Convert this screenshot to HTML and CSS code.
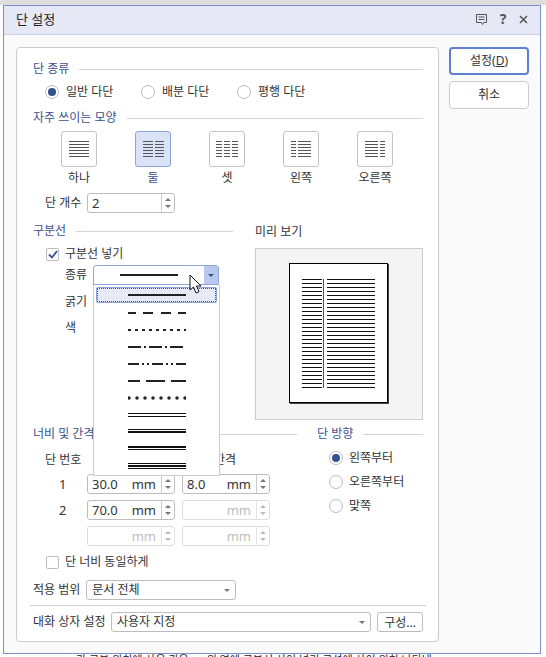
FILE: index.html
```html
<!DOCTYPE html>
<html lang="ko">
<head>
    <meta charset="UTF-8">
    <title>단 설정</title>
    <link rel="stylesheet" href="styles.css">
</head>
<body>
    <div class="top-strip"></div>
    <div class="dialog">
        <div class="titlebar">
            <span class="title">단 설정</span>
            <div class="title-icons">
                <svg width="13" height="13" viewBox="0 0 13 13"><path d="M1.5 1.500h10v8h-3l-1 2-1-2h-5z M3.500 4h6 M3.500 6.500h6" fill="none" stroke="#555" stroke-width="1"/></svg>
                <span class="help">?</span>
                <svg width="11" height="11" viewBox="0 0 11 11"><path d="M2 2l7 7M9 2l-7 7" fill="none" stroke="#555" stroke-width="1.500"/></svg>
            </div>
        </div>
        <div class="body">
            <div class="panel">
                <div class="head first"><span>단 종류</span></div>
                <div class="radios">
                    <label class="radio-item w96"><i class="radio on"></i>일반 다단</label>
                    <label class="radio-item w96"><i class="radio"></i>배분 다단</label>
                    <label class="radio-item"><i class="radio"></i>평행 다단</label>
                </div>
                <div class="head shape-head"><span>자주 쓰이는 모양</span></div>
                <div class="shapes">
                    <div class="shape"><div class="shape-btn"><i class="bar c20"></i></div>하나</div>
                    <div class="shape sel"><div class="shape-btn"><i class="bar c10"></i><i class="bar c9"></i></div>둘</div>
                    <div class="shape"><div class="shape-btn"><i class="bar c6"></i><i class="bar c6"></i><i class="bar c6"></i></div>셋</div>
                    <div class="shape"><div class="shape-btn"><i class="bar c5"></i><i class="bar c13"></i></div>왼쪽</div>
                    <div class="shape"><div class="shape-btn"><i class="bar c13"></i><i class="bar c5"></i></div>오른쪽</div>
                </div>
                <div class="count-row">
                    <span class="count-label">단 개수</span>
                    <div class="spin w88"><span class="val">2</span><span class="arrows"><i class="up"></i><i class="down"></i></span></div>
                </div>

                <div class="middle">
                    <div class="divider-col">
                        <div class="head"><span>구분선</span></div>
                        <label class="check-row"><i class="check on"><svg width="10" height="9" viewBox="0 0 10 9"><path d="M1 4.500l3 3 5-6.500" fill="none" stroke="#34518f" stroke-width="1.800"/></svg></i>구분선 넣기</label>
                        <div class="kind-row">종류
                            <div class="combo">
                                <svg width="58" height="4" viewBox="0 0 58 4"><rect y="1" width="58" height="2" fill="#222"/></svg>
                                <span class="combo-btn"><i class="down dark"></i></span>
                            </div>
                        </div>
                        <div class="plain-row">굵기</div>
                        <div class="plain-row">색</div>
                    </div>
                    <div class="preview-col">
                        <div class="preview-label">미리 보기</div>
                        <div class="preview">
                            <div class="page">
                                <i class="text-lines left"></i>
                                <i class="sep"></i>
                                <i class="text-lines right"></i>
                            </div>
                        </div>
                    </div>
                </div>

                <div class="lower">
                    <div class="width-col">
                        <div class="head"><span>너비 및 간격</span></div>
                        <div class="width-grid">
                            <span class="col-title">단 번호</span><span class="col-title end">너비</span><span class="col-title end">간격</span>
                            <span class="num">1</span>
                            <div class="spin"><span class="val">30.0</span><span class="unit">mm</span><span class="arrows"><i class="up"></i><i class="down"></i></span></div>
                            <div class="spin"><span class="val">8.0</span><span class="unit">mm</span><span class="arrows"><i class="up"></i><i class="down"></i></span></div>
                            <span class="num">2</span>
                            <div class="spin"><span class="val">70.0</span><span class="unit">mm</span><span class="arrows"><i class="up"></i><i class="down"></i></span></div>
                            <div class="spin off"><span class="val"></span><span class="unit">mm</span><span class="arrows"><i class="up"></i><i class="down"></i></span></div>
                            <span class="num"></span>
                            <div class="spin off"><span class="val"></span><span class="unit">mm</span><span class="arrows"><i class="up"></i><i class="down"></i></span></div>
                            <div class="spin off"><span class="val"></span><span class="unit">mm</span><span class="arrows"><i class="up"></i><i class="down"></i></span></div>
                        </div>
                        <label class="check-row same"><i class="check"></i>단 너비 동일하게</label>
                    </div>
                    <div class="dir-col">
                        <div class="head"><span>단 방향</span></div>
                        <div class="dir-list">
                            <label class="radio-item"><i class="radio on"></i>왼쪽부터</label>
                            <label class="radio-item"><i class="radio"></i>오른쪽부터</label>
                            <label class="radio-item"><i class="radio"></i>맞쪽</label>
                        </div>
                    </div>
                </div>

                <div class="apply-row">
                    <span>적용 범위</span>
                    <div class="select w150">문서 전체<i class="down"></i></div>
                </div>
                <div class="settings-row">
                    <span class="settings-label">대화 상자 설정</span>
                    <div class="select grow">사용자 지정<i class="down"></i></div>
                    <button class="small-btn">구성...</button>
                </div>

                <!-- open list of the line kind combo -->
                <div class="droplist">
                    <div class="line-item current"><svg width="58" height="4"><rect y="1" width="58" height="2" fill="#222"/></svg></div>
                    <div class="line-item"><svg width="58" height="4"><line x2="58" y1="2" y2="2" stroke="#222" stroke-width="2" stroke-dasharray="8 7 10 8 10 7"/></svg></div>
                    <div class="line-item"><svg width="58" height="4"><line x2="58" y1="2" y2="2" stroke="#222" stroke-width="2" stroke-dasharray="3 4"/></svg></div>
                    <div class="line-item"><svg width="58" height="4"><line x2="58" y1="2" y2="2" stroke="#222" stroke-width="2" stroke-dasharray="13 3 2 3"/></svg></div>
                    <div class="line-item"><svg width="58" height="4"><line x2="58" y1="2" y2="2" stroke="#222" stroke-width="2" stroke-dasharray="11 3 2 3 2 3"/></svg></div>
                    <div class="line-item"><svg width="58" height="4"><line x2="58" y1="2" y2="2" stroke="#222" stroke-width="2" stroke-dasharray="12 6 19 6 15"/></svg></div>
                    <div class="line-item"><svg width="58" height="4"><line x1="1" x2="58" y1="2" y2="2" stroke="#222" stroke-width="3.500" stroke-linecap="round" stroke-dasharray="0 8"/></svg></div>
                    <div class="line-item"><svg width="58" height="4"><rect width="58" height="1" fill="#111"/><rect y="3" width="58" height="1" fill="#111"/></svg></div>
                    <div class="line-item"><svg width="58" height="5"><rect width="58" height="1" fill="#111"/><rect y="2" width="58" height="2" fill="#111"/></svg></div>
                    <div class="line-item"><svg width="58" height="5"><rect width="58" height="2" fill="#111"/><rect y="3" width="58" height="1" fill="#111"/></svg></div>
                    <div class="line-item"><svg width="58" height="6"><rect width="58" height="1" fill="#111"/><rect y="2" width="58" height="2" fill="#111"/><rect y="5" width="58" height="1" fill="#111"/></svg></div>
                </div>
                <svg class="cursor" width="15" height="21" viewBox="0 0 15 21"><path d="M1 1v15l3.500-3 2.500 6 3-1.300-2.500-5.700h4.500z" fill="#fff" stroke="#111" stroke-width="1"/></svg>
            </div>
            <div class="side">
                <button class="btn primary">설정(<u>D</u>)</button>
                <button class="btn">취소</button>
            </div>
        </div>
    </div>
    <div class="behind"><span>가 구분 위치에 사용 같은</span><span>위 옆에 구분선 사이 넣기 구성에 사이 위치 나타낸</span></div>
</body>
</html>
```

FILE: styles.css
```css
* {
    box-sizing: border-box;
}

html, body {
    height: 657px;
    overflow: hidden;
}

body {
    margin: 0;
    background-color: #FFFFFF;
    font-family: "Noto Sans", "Noto Sans CJK KR", sans-serif;
    font-size: 12px;
    line-height: 16px;
    color: #333;
}

i {
    display: block;
    font-style: normal;
}

.top-strip {
    height: 5px;
    background-color: #DEDEDE;
}

.dialog {
    width: 538px;
    height: 649px;
    margin-left: 3px;
    border: 1px solid #7C90CC;
    background-color: #FAFAFA;
}

.titlebar {
    height: 29px;
    background-color: #E6E9F5;
    border-bottom: 1px solid #C8D2EC;
    display: flex;
    align-items: center;
    justify-content: space-between;
    padding: 0 11px 2px 12px;
}

.title {
    font-size: 13px;
    color: #222;
}

.title-icons {
    display: flex;
    align-items: center;
    gap: 9px;
}

.help {
    font-weight: 700;
    font-size: 14px;
    color: #555;
    width: 12px;
    text-align: center;
}

.body {
    display: flex;
    padding: 12px 0 0 12px;
    gap: 10px;
}

.panel {
    position: relative;
    width: 423px;
    height: 595px;
    background-color: #FFFFFF;
    border: 1px solid #CCC;
    border-radius: 4px;
    padding: 13px 15px 0 16px;
}

.side {
    display: flex;
    flex-direction: column;
    gap: 6px;
}

.btn {
    width: 80px;
    height: 28px;
    background-color: #FFFFFF;
    border: 1px solid #CCC;
    border-radius: 4px;
    font: inherit;
    color: #333;
    padding: 0;
}

.btn.primary {
    border: 2px solid #5F7FD4;
}

/* section heading with a rule behind it */
.head {
    display: flex;
    align-items: center;
    height: 16px;
    color: #3C4F8F;
}

.head::after {
    content: "";
    flex: 1;
    height: 1px;
    margin-left: 10px;
    background-color: #D4D4D4;
}

.radios {
    display: flex;
    margin: 7px 0 0 12px;
    height: 16px;
}

.radio-item {
    display: flex;
    align-items: center;
    gap: 7px;
}

.dir-list .radio-item {
    gap: 6px;
}

.w96 {
    width: 96px;
}

.radio {
    width: 14px;
    height: 14px;
    border: 1px solid #BDBDBD;
    border-radius: 50%;
    background-color: #FFFFFF;
}

.radio.on::after {
    content: "";
    display: block;
    width: 8px;
    height: 8px;
    margin: 2px;
    border-radius: 50%;
    background-color: #34518F;
}

.shape-head {
    margin-top: 10px;
}

.shapes {
    display: flex;
    margin: 5px 0 0 28px;
}

.shape {
    display: flex;
    flex-direction: column;
    align-items: center;
    width: 36px;
    margin-right: 38px;
    white-space: nowrap;
    gap: 3px;
}

.shape-btn {
    width: 36px;
    height: 36px;
    border: 1px solid #C4C4C4;
    border-radius: 3px;
    background-color: #FFFFFF;
    display: flex;
    justify-content: center;
    align-items: center;
    gap: 2px;
}

.shape.sel .shape-btn {
    background-color: #D9E2F6;
    border-color: #8EA4DC;
}

.shape.sel {
    color: #3C4F8F;
}

.bar {
    height: 16px;
    background: repeating-linear-gradient(#555 0, #555 1px, transparent 1px, transparent 3px);
}

.c20 { width: 20px; }
.c10 { width: 10px; }
.c9 { width: 9px; }
.c6 { width: 6px; }
.c5 { width: 5px; }
.c13 { width: 13px; }

.count-row {
    display: flex;
    align-items: center;
    margin: 7px 0 0 12px;
    height: 20px;
    gap: 10px;
}

.count-label {
    width: 32px;
    white-space: nowrap;
}

/* number field with up/down buttons */
.spin {
    display: flex;
    align-items: center;
    height: 20px;
    border: 1px solid #BDBDBD;
    border-radius: 3px;
    background-color: #FFFFFF;
    padding-left: 4px;
    font-size: 13px;
    color: #333;
}

.w88 {
    width: 88px;
}

.spin .val {
    flex: 1;
}

.spin .unit {
    margin-right: 5px;
}

.arrows {
    width: 13px;
    height: 18px;
    border-left: 1px solid #CCC;
    display: flex;
    flex-direction: column;
    align-items: center;
    justify-content: center;
    gap: 4px;
}

.up {
    width: 0;
    height: 0;
    border-left: 3px solid transparent;
    border-right: 3px solid transparent;
    border-bottom: 3px solid #777;
}

.down {
    width: 0;
    height: 0;
    border-left: 3px solid transparent;
    border-right: 3px solid transparent;
    border-top: 3px solid #777;
}

.down.dark {
    border-top-color: #34518F;
}

.spin.off {
    border-color: #DEDEDE;
    color: #BDBDBD;
}

.spin.off .arrows {
    border-left-color: #E4E4E4;
}

.spin.off .up {
    border-bottom-color: #BBB;
}

.spin.off .down {
    border-top-color: #BBB;
}

.middle {
    display: flex;
    gap: 22px;
    margin-top: 10px;
    height: 203px;
}

.divider-col {
    width: 200px;
}

.check-row {
    display: flex;
    align-items: center;
    gap: 6px;
    margin: 7px 0 0 13px;
    height: 16px;
}

.check {
    width: 13px;
    height: 13px;
    border: 1px solid #BDBDBD;
    border-radius: 2px;
    background-color: #FFFFFF;
    display: flex;
    align-items: center;
    justify-content: center;
}

.kind-row {
    display: flex;
    align-items: center;
    gap: 6px;
    margin: 3px 0 0 32px;
    height: 20px;
    white-space: nowrap;
}

.combo {
    width: 126px;
    height: 20px;
    border: 1px solid #8EA4DC;
    border-radius: 3px 3px 0 0;
    background-color: #FFFFFF;
    display: flex;
    align-items: center;
    justify-content: space-between;
    padding-left: 26px;
}

.combo-btn {
    width: 14px;
    height: 18px;
    background-color: #B9C8EC;
    display: flex;
    align-items: center;
    justify-content: center;
}

.plain-row {
    height: 26px;
    padding-left: 32px;
    display: flex;
    align-items: center;
}

.kind-row + .plain-row {
    margin-top: 4px;
}

.preview-col {
    width: 168px;
}

.preview-label {
    height: 25px;
    padding-top: 1px;
}

.preview {
    height: 172px;
    border: 1px solid #CCC;
    background-color: #F4F4F4;
    padding: 14px 0 0 33px;
}

.page {
    width: 99px;
    height: 140px;
    background-color: #FFFFFF;
    border: 1px solid #000;
    box-shadow: 1px 1px 0 #444;
    display: flex;
    padding: 15px 0 0 12px;
}

.text-lines {
    height: 109px;
    background: repeating-linear-gradient(#111 0, #111 1px, transparent 1px, transparent 4px);
}

.text-lines.left {
    width: 20px;
}

.text-lines.right {
    width: 48px;
}

.sep {
    width: 1px;
    height: 109px;
    margin: 0 3px 0 1px;
    background-color: #555;
}

.lower {
    display: flex;
    gap: 20px;
    height: 152px;
}

.width-col {
    width: 264px;
}

.dir-col {
    width: 106px;
}

.width-grid {
    display: grid;
    grid-template-columns: 47px 88px 88px;
    column-gap: 7px;
    row-gap: 6px;
    grid-template-rows: 17px 20px 20px 20px;
    margin-top: 9px;
    align-items: center;
}

.col-title {
    padding-left: 12px;
    white-space: nowrap;
}

.col-title.end {
    padding: 0 34px 0 0;
    text-align: right;
}

.num {
    padding-left: 26px;
    font-size: 13px;
}

.same {
    margin-top: 8px;
}

.dir-list {
    display: flex;
    flex-direction: column;
    gap: 8px;
    margin: 8px 0 0 12px;
}

.apply-row {
    display: flex;
    align-items: center;
    gap: 6px;
    height: 20px;
    margin-top: 2px;
}

.select {
    height: 20px;
    border: 1px solid #BDBDBD;
    border-radius: 3px;
    background-color: #FFFFFF;
    display: flex;
    align-items: center;
    justify-content: space-between;
    padding: 0 5px;
}

.w150 {
    width: 150px;
}

.settings-row {
    display: flex;
    align-items: flex-start;
    gap: 6px;
    height: 33px;
    padding: 6px 3px 0;
    margin: 5px -3px 0;
    border-top: 1px solid #D4D4D4;
    line-height: 20px;
}

.settings-label {
    width: 72px;
    flex-shrink: 0;
    white-space: nowrap;
}

.grow {
    width: 260px;
    flex-shrink: 0;
}

.small-btn {
    width: 46px;
    height: 20px;
    padding: 0;
    background-color: #FFFFFF;
    border: 1px solid #BDBDBD;
    border-radius: 3px;
    font: inherit;
    color: #333;
}

/* open list, floats over the other fields */
.droplist {
    position: absolute;
    left: 76px;
    top: 237px;
    width: 127px;
    height: 191px;
    background-color: #FFFFFF;
    border: 1px solid #CCC;
    border-top: none;
    padding: 2px;
}

.line-item {
    height: 17px;
    display: flex;
    align-items: center;
    justify-content: center;
}

.line-item.current {
    height: 16px;
    margin-bottom: 1px;
    background-color: #E6EAF7;
    border: 1px solid #8EA4DC;
    border-radius: 2px;
    outline: 1px dotted #555;
    outline-offset: -2px;
}

.cursor {
    position: absolute;
    left: 172px;
    top: 226px;
}

.behind {
    position: absolute;
    left: 76px;
    top: 652px;
    display: flex;
    gap: 18px;
    color: #222;
    white-space: nowrap;
    font-size: 11px;
    height: 5px;
    overflow: hidden;
}
```
